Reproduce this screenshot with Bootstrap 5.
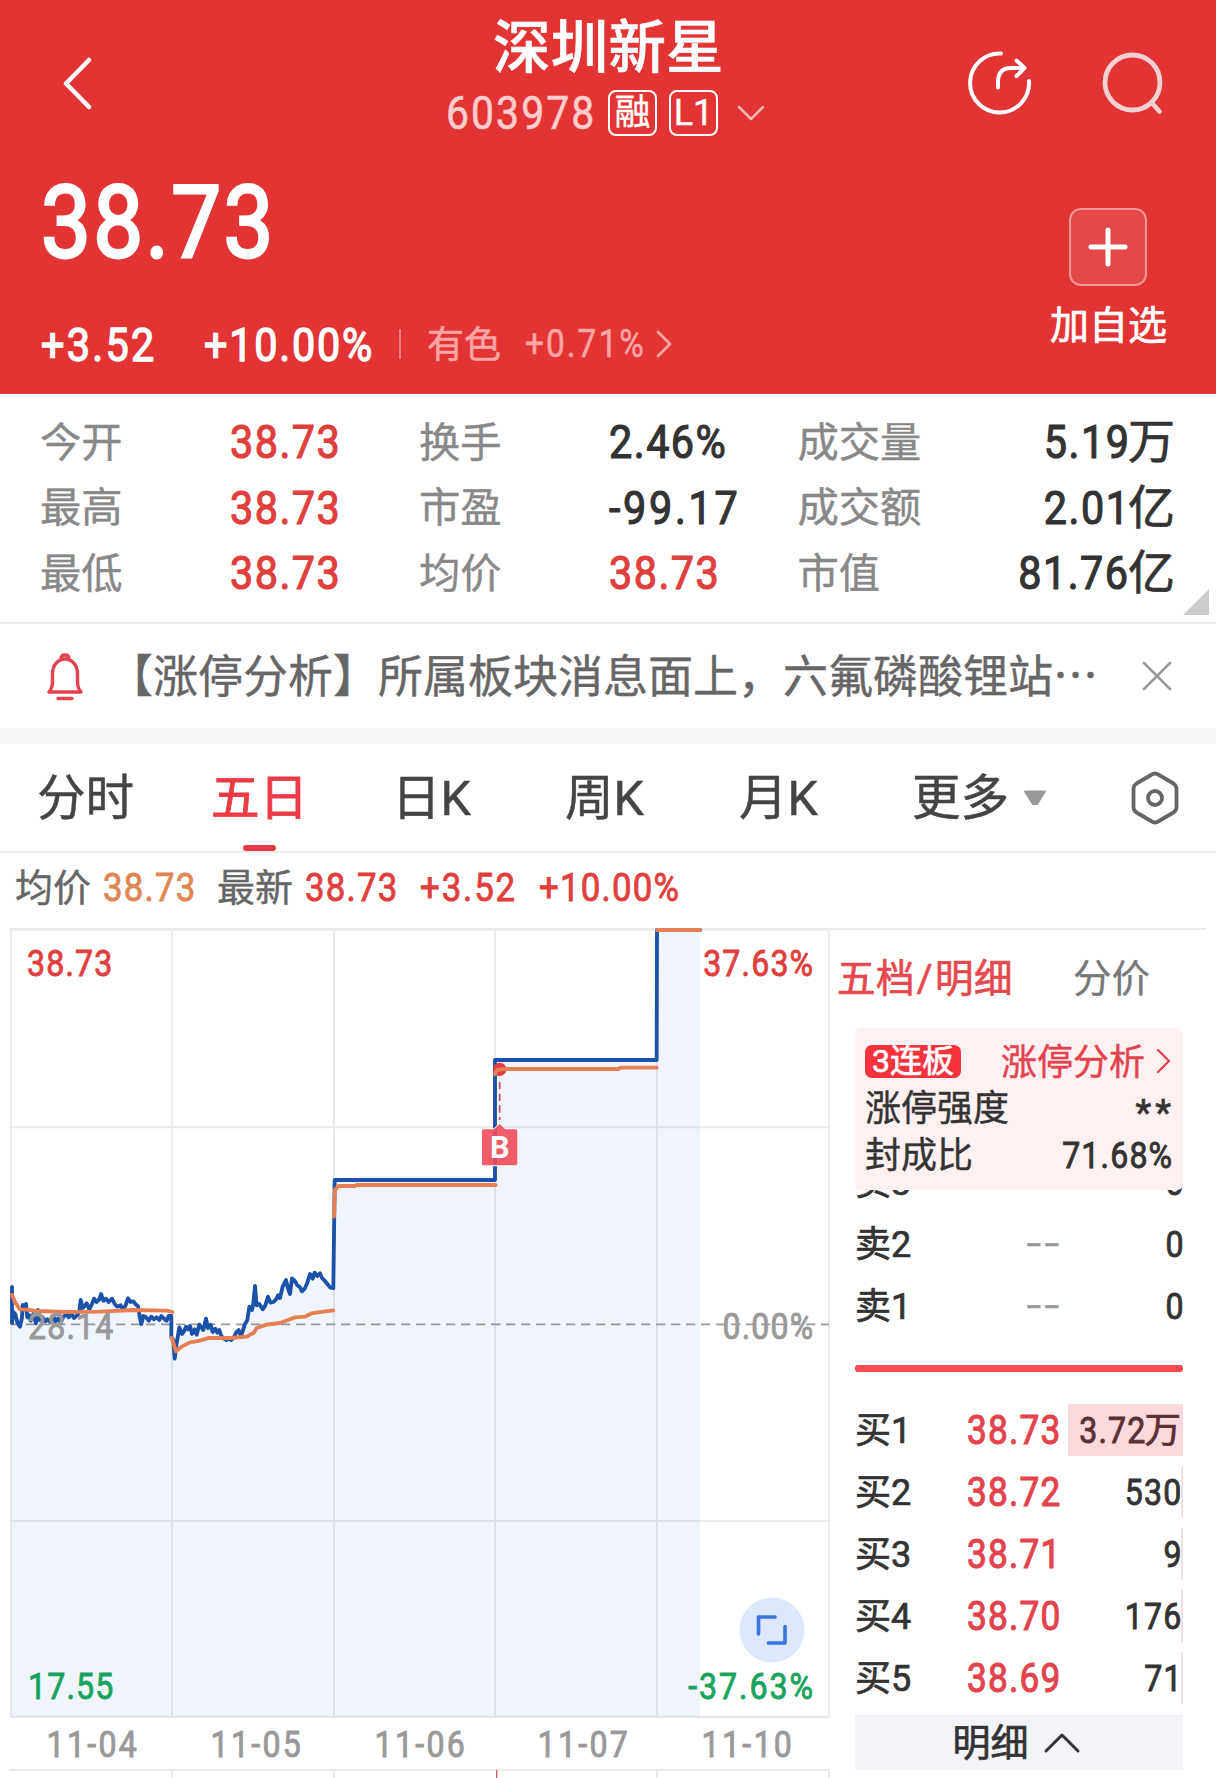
<!DOCTYPE html>
<html lang="zh-CN">
<head>
<meta charset="utf-8">
<meta name="viewport" content="width=device-width, initial-scale=1">
<title>深圳新星 603978</title>
<link href="https://cdn.jsdelivr.net/npm/bootstrap@5.3.0/dist/css/bootstrap.min.css" rel="stylesheet">
<style>
  body{font-family:Roboto,"Noto Sans CJK SC",sans-serif;font-weight:400;-webkit-text-stroke:.7px currentColor;color:#333;width:1216px;height:1778px;overflow:hidden;line-height:1;letter-spacing:0;background:#fff}
  svg{display:block;flex:none;fill:none;stroke-linecap:round;stroke-linejoin:round}
  /* Narrow, widely spaced numerals */
  .dig{display:inline-block;transform:translateX(1px) scaleX(.88);transform-origin:left;letter-spacing:.036em;white-space:nowrap;-webkit-text-stroke:.9px currentColor}
  .dig.to-r{transform-origin:right;margin-right:-.02em}
  .cjk{font-family:"Noto Sans CJK SC",sans-serif}
  .han{padding-top:3px;-webkit-text-stroke:.4px currentColor}
  .up{color:#df403d}.down{color:#1aa35f}.flat{color:#999}
  .quote-head{background:#e33435;height:394px;color:#fff}
  .head-top{height:140px;padding:0 50px 0 62px}
  .stock-name{font-size:57.5px;letter-spacing:.2px;height:54px;line-height:54px;margin-top:22px;padding-left:48px;font-weight:500;-webkit-text-stroke:.6px #fff}
  .code-row{height:46px;margin-top:14px}
  .code-no{font-size:46.500px;color:#fdcccc;width:163px;line-height:46px}
  .code-no.dig{letter-spacing:.05em;-webkit-text-stroke:.6px}
  .tagbox{width:49px;height:46px;border:2px solid #fff;border-radius:8px;font-size:36px;margin-right:12px;-webkit-text-stroke:.4px}
  .head-price{height:254px;padding:0 49px 0 40px}
  .big-price{font-size:101px;margin-top:32px;height:100px}
  .big-price.dig{display:block;-webkit-text-stroke:3px #fff;letter-spacing:.026em}
  .chg-row{font-size:47px;margin-top:37px;height:70px}
  .chg-row .dig{-webkit-text-stroke:1.4px #fff}
  .chg-row .sector{font-size:38px;color:#fba6a6;-webkit-text-stroke:.5px #fba6a6}
  .chg-row .sector.dig{letter-spacing:.06em}
  .v-rule{width:2px;height:30px;background:#ee8081}
  .add-box{width:78px;height:78px;margin-top:68px;border:2px solid #f19697;border-radius:12px;background:rgba(255,255,255,.1)}
  .add-label{font-size:39px;margin-top:21px}
  .stats{height:228px;padding:15px 41px 0 40px;position:relative}
  .stat-row{height:65.5px;font-size:47px;display:grid;grid-template-columns:189px 190px 188.5px 190px 1fr;align-items:center}
  .stat-row .han{font-size:41.3px;color:#888}
  .stat-row .dig{-webkit-text-stroke:1.2px}
  .fold{position:absolute;right:7px;bottom:7px}
  .notice{height:106px;border-top:2px solid #ebebeb}
  .notice-text{font-size:45px;color:#666;margin-left:24px;line-height:66px;padding-bottom:5px;-webkit-text-stroke:.4px #666}
  .gap-band{height:16px;background:#f7f7f7}
  .tabs{height:109px;border-bottom:2px solid #ebebeb;font-size:48.500px;color:#444;position:relative;-webkit-text-stroke:.5px}
  .tabs span{position:relative;height:107px;display:flex;align-items:center;padding-top:4px;white-space:nowrap}
  .tabs .on{color:#eb3b47;-webkit-text-stroke:.9px}
  .tabs .on::after{content:"";position:absolute;left:32px;bottom:0;width:33px;height:6px;border-radius:3px;background:#e63b46}
  .info{height:67px;padding-left:15px;font-size:39.5px}
  .info>span{padding-top:2px}
  .info .han{font-size:38px;color:#666}
  .board{height:858px}
  .chart{width:830px;height:858px;position:relative}
  .chart svg.plot{position:absolute;left:0;top:0;-webkit-text-stroke:0}
  .tick{position:absolute;font-size:36.500px}
  .tick.to-r{right:17px}
  .dates{position:absolute;left:10px;width:819px;top:800px;height:51px;font-size:36.500px}
  .dates .dig{flex:1;text-align:center;color:#999;transform-origin:center;letter-spacing:2.6px}
  .full{position:absolute;left:738.500px;top:677px}
  .depth{width:386px;height:858px}
  .depth-top{height:100px;border-top:2px solid #ebebeb;margin-right:10px;padding-left:7px;font-size:38.500px}
  .depth-top .price-tab{width:236px;color:#e5484d;letter-spacing:.4px}
  .rows{padding-left:25px;padding-right:33px}
  .lim{height:162px;background:#fff0f1;border-radius:6px;padding:10px 11px 0 10px;font-size:36.500px;position:relative;z-index:2}
  .lim>div{height:46.5px}
  .streak{background:#f5333f;color:#fff;border-radius:7px;width:96px;height:33px;font-size:32px;margin-right:auto}
  .lim .han{font-size:36px}
  .ask,.bid{height:62px;font-size:36.500px;display:grid;grid-template-columns:110px 95px 123px;align-items:center}
  .lbl{white-space:nowrap;font-size:36px;padding-top:2px}
  .bid .up{font-size:40px;color:#e2434c;padding-top:2px;justify-self:end;-webkit-text-stroke:1.1px}
  .qty{height:52px;line-height:54px;text-align:right;border-right:2px solid #f2dfe0;margin-left:8px;white-space:nowrap}
  .dashes{color:#999;justify-self:end;letter-spacing:2.800px;margin-right:-3px;transform:scaleX(1.4);transform-origin:right}
  .qty.full-bar{background:#fcd9dc;border-color:#fcd9dc;color:#5a3035}
  .first-ask{margin-top:-39px}
  .split{height:7px;border-radius:3px;background:#f94b50;margin:28px 0 27px}
  .more{height:55px;background:#f3f4f8;font-size:38px;margin-top:6px}
</style>
<script src="https://cdn.jsdelivr.net/npm/bootstrap@5.3.0/dist/js/bootstrap.bundle.min.js"></script>
</head>
<body>
<header class="quote-head">
  <div class="head-top d-flex align-items-start justify-content-between position-relative">
    <svg width="32" height="54" style="margin-top:56px" stroke="#fff" stroke-width="4.500"><path d="M27 4 4 27.500 27 51"/></svg>
    <div class="position-absolute" style="left:445px">
      <div class="stock-name">深圳新星</div>
      <div class="code-row d-flex align-items-center">
        <span class="code-no dig">603978</span>
        <span class="tagbox d-flex align-items-center justify-content-center">融</span>
        <span class="tagbox d-flex align-items-center justify-content-center">L1</span>
        <svg style="margin-left:7px" width="28" height="18" stroke="#f7b5b5" stroke-width="2.500"><path d="M2 3 14 15 26 3"/></svg>
      </div>
    </div>
    <div class="d-flex" style="gap:70px;margin-top:50px">
      <svg width="64" height="66" stroke="#fff" stroke-width="4"><path d="M33 3.500A29.500 29.500 0 1 0 61 31"/><path d="M30 37.500V32Q30 18 43 18H56M48.500 10.500 56.500 18 48.500 26"/></svg>
      <svg width="64" height="66" stroke="#f4d0d0" stroke-width="4.800"><circle cx="30.500" cy="32.500" r="27.500"/><path d="M49.500 52.500 57.500 61.500"/></svg>
    </div>
  </div>
  <div class="head-price d-flex justify-content-between">
    <div>
      <div class="big-price dig">38.73</div>
      <div class="chg-row d-flex align-items-center">
        <span class="dig" style="width:163px;letter-spacing:.055em">+3.52</span><span class="dig" style="width:196px;letter-spacing:.043em">+10.00%</span>
        <i class="v-rule"></i>
        <span class="sector han" style="font-size:37px;margin-left:26px;width:97px">有色</span>
        <span class="sector dig" style="width:130px">+0.71%</span>
        <svg width="20" height="30" stroke="#fba6a6" stroke-width="2.800"><path d="M4 3 16 15 4 27"/></svg>
      </div>
    </div>
    <div class="d-flex flex-column align-items-center">
      <div class="add-box d-flex align-items-center justify-content-center"><svg width="42" height="42" stroke="#fff" stroke-width="5"><path d="M21 4V38M4 21H38"/></svg></div>
      <div class="add-label">加自选</div>
    </div>
  </div>
</header>

<section class="stats">
  <div class="stat-row"><span class="han">今开</span><span class="up dig">38.73</span><span class="han">换手</span><span class="dig">2.46%</span><span class="d-flex justify-content-between align-items-center"><span class="han">成交量</span><span><span class="dig to-r">5.19</span>万</span></span></div>
  <div class="stat-row"><span class="han">最高</span><span class="up dig">38.73</span><span class="han">市盈</span><span class="dig" style="letter-spacing:.065em">-99.17</span><span class="d-flex justify-content-between align-items-center"><span class="han">成交额</span><span><span class="dig to-r">2.01</span>亿</span></span></div>
  <div class="stat-row"><span class="han">最低</span><span class="up dig">38.73</span><span class="han">均价</span><span class="up dig">38.73</span><span class="d-flex justify-content-between align-items-center"><span class="han">市值</span><span><span class="dig to-r">81.76</span>亿</span></span></div>
  <svg class="fold" width="26" height="26"><path d="M26 0V26H0Z" fill="#ccc"/></svg>
</section>

<section class="notice d-flex align-items-center">
  <svg style="margin-left:46px" width="38" height="50" stroke="#e2434f" stroke-width="3.400"><path d="M3 41H35C32 38 31.500 35 31.500 30V23C31.500 14 26 8 19 8S6.500 14 6.500 23V30C6.500 35 6 38 3 41ZM15 8Q15 4 19 4T23 8M12 47.500H26"/></svg>
  <span class="notice-text cjk">【涨停分析】所属板块消息面上，六氟磷酸锂站…</span>
  <svg style="margin-left:43px" width="32" height="32" stroke="#999" stroke-width="2.600"><path d="M3 3 29 29M29 3 3 29"/></svg>
</section>
<div class="gap-band"></div>

<nav class="tabs d-flex">
  <span style="margin-left:37px;width:174px">分时</span>
  <span class="on" style="width:181px">五日</span>
  <span style="width:173px">日K</span>
  <span style="width:174px">周K</span>
  <span style="width:173px">月K</span>
  <span style="width:97px">更多</span>
  <svg class="align-self-center" style="margin-left:14px" width="24" height="16"><path d="M2 1.500H22L14 14H10Z" fill="#999" stroke="#999" stroke-width="2"/></svg>
  <svg class="align-self-center" style="margin-left:82px" width="52" height="56" stroke="#666" stroke-width="3.800"><path d="M22 5Q26 2 30 5L44.500 13.500Q47.500 15.500 47.500 19V37Q47.500 40.500 44.500 42.500L30 51Q26 54 22 51L7.500 42.500Q4.500 40.500 4.500 37V19Q4.500 15.500 7.500 13.500Z"/><circle cx="26" cy="28" r="7"/></svg>
</nav>

<div class="info d-flex align-items-center">
  <span class="han" style="width:87px">均价</span><span class="dig" style="width:115px;color:#df8753">38.73</span>
  <span class="han" style="width:87px">最新</span><span class="up dig" style="width:115px">38.73</span><span class="up dig" style="width:119px;letter-spacing:.055em">+3.52</span><span class="up dig">+10.00%</span>
</div>

<main class="board d-flex">
  <div class="chart">
    <svg class="plot" width="832" height="858" viewBox="0 0 2496 2574">
      <g stroke="#ebebeb" stroke-width="6" stroke-linecap="butt">
        <path d="M28 622H2487M28 1803H2487M28 2550H2490"/><path stroke-width="8" d="M28 28H2490M28 2391H2490"/>
        <path d="M33 28V2391M516 28V2391M1002 28V2391M1485 28V2391M1971 28V2391M2487 28V2391"/>
        <path d="M516 2550V2574M1002 2550V2574M1971 2550V2574M2487 2550V2574"/>
        <path d="M1490 2550V2574" stroke="#c06068" stroke-width="4"/>
      </g>
      <path d="M33 1213H2487" stroke="#999" stroke-width="5" stroke-dasharray="28 17" stroke-linecap="butt"/>
      <g transform="translate(0 930)">
        <path id="area" fill="#3776e6" fill-opacity=".08" d=""/>
        <path id="price" stroke="#1b51a8" stroke-width="11.500" d="M36 171V279L40 246 46 252 52 278 60 290 66 262 68 225 72 236 78 222 82 262 88 256 92 272 100 252 108 280 114 240 120 270 128 262 136 274 142 268 152 276 160 258 166 274 174 266 182 278 190 260 200 254 206 262 214 250 222 264 232 256 238 244 242 210 248 234 256 226 260 220 268 238 276 222 282 206 290 216 298 208 303 192 310 212 318 206 326 216 336 206 344 222 352 230 362 226 368 238 376 228 384 205 392 216 400 214 408 224 414 228 420 264 424 282 430 258 438 262 446 272 454 260 462 268 470 262 478 270 484 258 492 266 500 272 506 258 514 258V322L520 330 524 386 530 340 538 292 546 312 552 304 558 290 564 298 570 288 576 312 584 298 590 314 598 284 604 292 610 300 618 266 624 294 632 284 638 306 646 296 652 308 658 300 664 318 672 326 678 330 686 326 694 330 702 322 708 308 716 300 722 318 728 304 734 284 742 270 748 230 756 240 760 220 765 168 770 226 778 222 788 238 796 226 804 200 812 218 820 216 828 208 834 196 840 204 848 170 858 150 864 176 870 192 876 145 884 152 892 166 900 172 906 184 914 176 922 158 930 132 938 146 944 128 952 138 960 130 966 144 974 152 984 164 990 172 1000 174L1004-150H1485V-510H1970L1971-900H2100"/>
        <path stroke="#e67f52" stroke-width="11.500" d="M36 194 46 218 60 238 80 239 110 243 200 246 300 245 400 240 500 242 517 246M515 323 528 364 545 350 570 337 600 332 625 324 690 324 740 320 752 313 762 308 770 294 800 284 840 279 885 262 915 260 935 250 970 245 1000 241M1002-40 1005-120 1015-132H1065L1070-135H1487M1971-900H2100"/>
        <circle cx="1499" cy="-482" r="20" fill="#e63946"/>
        <path stroke="#e67f52" stroke-width="11.500" d="M1485-468 1492-480 1510-483H1855L1862-487H1970"/>
        <path stroke="#c44863" stroke-width="5" stroke-dasharray="22 13" stroke-linecap="butt" d="M1499-444V-330"/>
        <path fill="#f04d5a" fill-opacity=".9" stroke="#fff" stroke-width="5" paint-order="stroke" d="M1450-302H1482L1499-318 1516-302H1548Q1552-302 1552-298V-198Q1552-194 1548-194H1450Q1446-194 1446-198V-298Q1446-302 1450-302Z"/>
        <text x="1499" y="-215" text-anchor="middle" font-size="92" font-weight="700" fill="#fff">B</text>
      </g>
    </svg>
    <span class="tick dig up" style="left:26px;top:26px">38.73</span>
    <span class="tick dig up to-r" style="top:26px">37.63%</span>
    <span class="tick dig flat" style="left:27px;top:389px">28.14</span>
    <span class="tick dig flat to-r" style="top:389px">0.00%</span>
    <span class="tick dig down" style="left:27px;top:749px">17.55</span>
    <span class="tick dig down to-r" style="top:749px;letter-spacing:.06em">-37.63%</span>
    <svg class="full" width="66" height="66" stroke="#3975e2" stroke-width="3.600"><circle cx="33" cy="33" r="32.500" fill="#dde8fc" stroke="none"/><path d="M19.500 37V20H36M46 29.500V46H29.500"/></svg>
    <div class="dates d-flex align-items-center"><div class="dig">11-04</div><div class="dig">11-05</div><div class="dig">11-06</div><div class="dig">11-07</div><div class="dig">11-10</div></div>
  </div>
  <aside class="depth">
    <div style="height:8px"></div>
    <div class="depth-top d-flex align-items-center"><span class="price-tab">五档<span style="margin:0 2px">/</span>明细</span><span style="color:#777;-webkit-text-stroke:.3px">分价</span></div>
    <div class="rows">
      <div class="lim">
        <div class="d-flex align-items-center"><span class="streak d-flex align-items-center justify-content-center">3连板</span><span class="han" style="color:#e2434c">涨停分析</span><svg style="margin-left:10px" width="17" height="28" stroke="#e2434c" stroke-width="2.200"><path d="M3 3 14 14 3 25"/></svg></div>
        <div class="d-flex align-items-center justify-content-between"><span class="han">涨停强度</span><span style="letter-spacing:4px;padding-top:10px;margin-right:-3px">**</span></div>
        <div class="d-flex align-items-center justify-content-between"><span class="han">封成比</span><span class="dig to-r" style="padding-top:3px">71.68%</span></div>
      </div>
      <div class="ask first-ask"><span class="lbl">卖3</span><span></span><span class="qty border-0"><span class="dig to-r">0</span></span></div>
      <div class="ask"><span class="lbl">卖2</span><span class="dashes">--</span><span class="qty border-0"><span class="dig to-r">0</span></span></div>
      <div class="ask"><span class="lbl">卖1</span><span class="dashes">--</span><span class="qty border-0"><span class="dig to-r">0</span></span></div>
      <div class="split"></div>
      <div class="bid"><span class="lbl">买1</span><span class="up dig to-r">38.73</span><span class="qty full-bar"><span class="dig to-r">3.72</span>万</span></div>
      <div class="bid"><span class="lbl">买2</span><span class="up dig to-r">38.72</span><span class="qty"><span class="dig to-r">530</span></span></div>
      <div class="bid"><span class="lbl">买3</span><span class="up dig to-r">38.71</span><span class="qty"><span class="dig to-r">9</span></span></div>
      <div class="bid"><span class="lbl">买4</span><span class="up dig to-r">38.70</span><span class="qty"><span class="dig to-r">176</span></span></div>
      <div class="bid"><span class="lbl">买5</span><span class="up dig to-r">38.69</span><span class="qty"><span class="dig to-r">71</span></span></div>
      <div class="more d-flex align-items-center justify-content-center"><span>明细</span><svg style="margin-left:14px;margin-right:5px" width="38" height="24" stroke="#333" stroke-width="3"><path d="M3 20 19 4 35 20"/></svg></div>
    </div>
  </aside>
</main>
<script>
  // The shaded area follows the price line down to the chart floor
  document.getElementById('area').setAttribute('d', document.getElementById('price').getAttribute('d') + 'V1461H33V171Z');
</script>
</body>
</html>
